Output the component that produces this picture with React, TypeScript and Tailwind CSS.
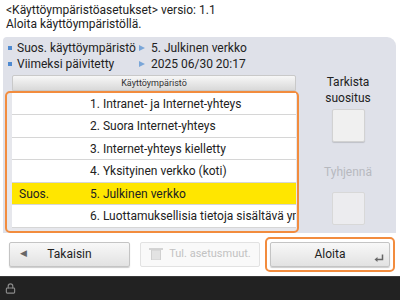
import { Lock } from 'lucide-react';

const rows = [
    { tag: '', label: '1. Intranet- ja Internet-yhteys' },
    { tag: '', label: '2. Suora Internet-yhteys' },
    { tag: '', label: '3. Internet-yhteys kielletty' },
    { tag: '', label: '4. Yksityinen verkko (koti)' },
    { tag: 'Suos.', label: '5. Julkinen verkko' },
    { tag: '', label: '6. Luottamuksellisia tietoja sisältävä ympäristö' },
];

function InfoRow({ label, value }: { label: string; value: string }) {
    return (
        <div className="flex h-[16px] items-center">
            <span className="ml-[5px] mr-[5px] h-[4px] w-[4px] bg-[#4f8ad0]" />
            <span className="w-[122px]">{label}</span>
            <span className="mr-[6px] h-0 w-0 border-y-[3.5px] border-l-[6px] border-y-transparent border-l-[#7aa6d8]" />
            <span>{value}</span>
        </div>
    );
}

export default function App() {
    return (
        <div className="flex h-[300px] w-[400px] flex-col overflow-hidden bg-white font-['Roboto',sans-serif] text-[12px] text-[#222]">
            {/* Title */}
            <div className="h-[37px] px-[6px] pt-[3px] leading-[14px]">
                <div>&lt;Käyttöympäristöasetukset&gt; versio: 1.1</div>
                <div>Aloita käyttöympäristöllä.</div>
            </div>

            {/* Panel */}
            <div className="ml-[3px] flex h-[196px] w-[393px] rounded-tl-[4px] rounded-tr-[9px] bg-[#dfe1e9]">
                <div className="flex w-[297px] flex-col pt-[3px]">
                    <InfoRow label="Suos. käyttöympäristö" value="5. Julkinen verkko" />
                    <InfoRow label="Viimeksi päivitetty" value="2025 06/30 20:17" />
                    <div className="ml-[9px] mt-[3px] flex h-[16px] w-[284px] items-center justify-center rounded-t-[2px] border border-[#c9c9c9] bg-gradient-to-b from-[#f7f7f7] to-[#d9d9d9] pt-[2px] text-[9px] leading-none text-[#333]">
                        Käyttöympäristö
                    </div>
                    <div className="ml-[2px] h-[143px] w-[294px] rounded-[5px] border-2 border-[#f28c3e] bg-[#e6e7ec] pl-[5px] pr-[1px]">
                        <div className="w-[284px] bg-white">
                            {rows.map((row) => (
                                <div
                                    key={row.label}
                                    className={`flex h-[22.5px] items-center overflow-hidden whitespace-nowrap border-b border-[#d6d6d6] ${row.tag ? 'bg-[#ffe600]' : ''}`}
                                >
                                    <span className="w-[78px] shrink-0 pl-[7px]">{row.tag}</span>
                                    <span>{row.label}</span>
                                </div>
                            ))}
                        </div>
                    </div>
                </div>

                <div className="flex flex-1 flex-col items-center pt-[37px] leading-[16px]">
                    <div className="text-center">
                        Tarkista
                        <br />
                        suositus
                    </div>
                    <div className="mt-[3px] h-[33px] w-[33px] rounded-[2px] border border-[#d2d2d2] bg-[#f0f0f0] shadow-[0_1px_1px_rgba(0,0,0,0.15)]" />
                    <div className="mt-[22px] text-[#b7b9bf]">Tyhjennä</div>
                    <div className="mt-[12px] h-[33px] w-[33px] rounded-[2px] border border-[#d8d8d8] bg-[#ececef]" />
                </div>
            </div>

            {/* Buttons */}
            <div className="flex h-[39px] items-center pl-[9px] pt-[3px]">
                <button className="relative flex h-[25px] w-[121px] items-center justify-center rounded-[2px] border border-[#c4c4c4] bg-gradient-to-b from-[#f8f8f8] to-[#e2e2e2] shadow-[0_1px_1px_rgba(0,0,0,0.2)]">
                    <span className="absolute left-[10px] text-[9px] text-[#666]">◀</span>
                    Takaisin
                </button>
                <button className="relative ml-[10px] flex h-[25px] w-[120px] items-center justify-center whitespace-nowrap rounded-[2px] border border-[#e2e2e2] bg-[#f9f9f9] pl-[20px] text-[11px] text-[#c2c2c2]">
                    <svg className="absolute left-[8px]" width="14" height="12" viewBox="0 0 14 12">
                        <rect x="0" y="0" width="14" height="2" fill="#d4d4d4" />
                        <rect x="2.5" y="2" width="9" height="10" fill="#e3e3e3" stroke="#d0d0d0" />
                    </svg>
                    Tul. asetusmuut.
                </button>
                <div className="ml-[5px] rounded-[5px] border-2 border-[#f28c3e] p-[3px]">
                    <button className="relative flex h-[25px] w-[120px] items-center justify-center rounded-[2px] border border-[#c4c4c4] bg-gradient-to-b from-[#f8f8f8] to-[#e2e2e2] shadow-[0_1px_1px_rgba(0,0,0,0.2)]">
                        Aloita
                        <svg className="absolute bottom-[4px] right-[5px]" width="10" height="8" viewBox="0 0 10 8">
                            <path d="M8.5 0.5 V5.5 H2" fill="none" stroke="#666" strokeWidth="1.5" />
                            <path d="M0.5 5.5 L3.5 3 V8 Z" fill="#666" />
                        </svg>
                    </button>
                </div>
            </div>

            {/* Status bar */}
            <div className="mt-auto flex h-[24px] items-center border-t border-[#3a3a3a] bg-[#222] pl-[5px]">
                <Lock className="h-[11px] w-[11px] text-[#8a8a8a]" strokeWidth={2.5} />
            </div>
        </div>
    );
}
